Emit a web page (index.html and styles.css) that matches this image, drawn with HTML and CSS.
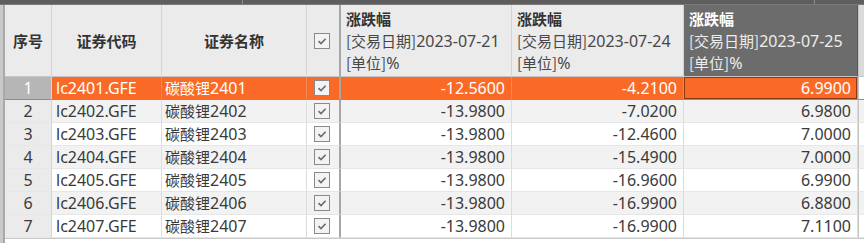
FILE: index.html
```html
<!DOCTYPE html>
<html lang="zh-CN">
<head>
<meta charset="utf-8">
<title>涨跌幅</title>
<link rel="stylesheet" href="styles.css">
</head>
<body>
<div class="topbar">
  <div class="seg s1"></div>
  <div class="seg s2"></div>
  <div class="seg s3"></div>
</div>
<div class="main">
  <div class="leftstrip"></div>
  <div class="grid">
    <div class="row head">
      <div class="c hc center">序号</div>
      <div class="c hc center">证券代码</div>
      <div class="c hc center">证券名称</div>
      <div class="c hc chk fz"><span class="box"><svg viewBox="0 0 14 14" width="14" height="14"><path d="M3.5 7.2 L6 9.6 L10.6 4.8" fill="none" stroke="#6a6a6a" stroke-width="1.6"/></svg></span></div>
      <div class="c hc multi"><b>涨跌幅</b><span><span class="zh">[交易日期]</span>2023-07-21</span><span><span class="zh">[单位]</span>%</span></div>
      <div class="c hc multi"><b>涨跌幅</b><span><span class="zh">[交易日期]</span>2023-07-24</span><span><span class="zh">[单位]</span>%</span></div>
      <div class="c hc multi dark"><b>涨跌幅</b><span><span class="zh">[交易日期]</span>2023-07-25</span><span><span class="zh">[单位]</span>%</span></div>
      <div class="c hc tail"></div>
    </div>

    <div class="row sel">
      <div class="c idx">1</div>
      <div class="c code">lc2401.GFE</div>
      <div class="c name"><span class="zh">碳酸锂</span>2401</div>
      <div class="c chk fz"><span class="box"><svg viewBox="0 0 14 14" width="14" height="14"><path d="M3.5 7.2 L6 9.6 L10.6 4.8" fill="none" stroke="#6a6a6a" stroke-width="1.6"/></svg></span></div>
      <div class="c num">-12.5600</div>
      <div class="c num">-4.2100</div>
      <div class="c num cur">6.9900</div>
      <div class="c tail"></div>
    </div>

    <div class="row alt">
      <div class="c idx">2</div>
      <div class="c code">lc2402.GFE</div>
      <div class="c name"><span class="zh">碳酸锂</span>2402</div>
      <div class="c chk fz"><span class="box"><svg viewBox="0 0 14 14" width="14" height="14"><path d="M3.5 7.2 L6 9.6 L10.6 4.8" fill="none" stroke="#6a6a6a" stroke-width="1.6"/></svg></span></div>
      <div class="c num">-13.9800</div>
      <div class="c num">-7.0200</div>
      <div class="c num">6.9800</div>
      <div class="c tail"></div>
    </div>

    <div class="row">
      <div class="c idx">3</div>
      <div class="c code">lc2403.GFE</div>
      <div class="c name"><span class="zh">碳酸锂</span>2403</div>
      <div class="c chk fz"><span class="box"><svg viewBox="0 0 14 14" width="14" height="14"><path d="M3.5 7.2 L6 9.6 L10.6 4.8" fill="none" stroke="#6a6a6a" stroke-width="1.6"/></svg></span></div>
      <div class="c num">-13.9800</div>
      <div class="c num">-12.4600</div>
      <div class="c num">7.0000</div>
      <div class="c tail"></div>
    </div>

    <div class="row alt">
      <div class="c idx">4</div>
      <div class="c code">lc2404.GFE</div>
      <div class="c name"><span class="zh">碳酸锂</span>2404</div>
      <div class="c chk fz"><span class="box"><svg viewBox="0 0 14 14" width="14" height="14"><path d="M3.5 7.2 L6 9.6 L10.6 4.8" fill="none" stroke="#6a6a6a" stroke-width="1.6"/></svg></span></div>
      <div class="c num">-13.9800</div>
      <div class="c num">-15.4900</div>
      <div class="c num">7.0000</div>
      <div class="c tail"></div>
    </div>

    <div class="row">
      <div class="c idx">5</div>
      <div class="c code">lc2405.GFE</div>
      <div class="c name"><span class="zh">碳酸锂</span>2405</div>
      <div class="c chk fz"><span class="box"><svg viewBox="0 0 14 14" width="14" height="14"><path d="M3.5 7.2 L6 9.6 L10.6 4.8" fill="none" stroke="#6a6a6a" stroke-width="1.6"/></svg></span></div>
      <div class="c num">-13.9800</div>
      <div class="c num">-16.9600</div>
      <div class="c num">6.9900</div>
      <div class="c tail"></div>
    </div>

    <div class="row alt">
      <div class="c idx">6</div>
      <div class="c code">lc2406.GFE</div>
      <div class="c name"><span class="zh">碳酸锂</span>2406</div>
      <div class="c chk fz"><span class="box"><svg viewBox="0 0 14 14" width="14" height="14"><path d="M3.5 7.2 L6 9.6 L10.6 4.8" fill="none" stroke="#6a6a6a" stroke-width="1.6"/></svg></span></div>
      <div class="c num">-13.9800</div>
      <div class="c num">-16.9900</div>
      <div class="c num">6.8800</div>
      <div class="c tail"></div>
    </div>

    <div class="row">
      <div class="c idx">7</div>
      <div class="c code">lc2407.GFE</div>
      <div class="c name"><span class="zh">碳酸锂</span>2407</div>
      <div class="c chk fz"><span class="box"><svg viewBox="0 0 14 14" width="14" height="14"><path d="M3.5 7.2 L6 9.6 L10.6 4.8" fill="none" stroke="#6a6a6a" stroke-width="1.6"/></svg></span></div>
      <div class="c num">-13.9800</div>
      <div class="c num">-16.9900</div>
      <div class="c num">7.1100</div>
      <div class="c tail"></div>
    </div>
  </div>
</div>
<div class="bottom">
  <div class="leftstrip"></div>
  <div class="bfill"></div>
</div>
</body>
</html>
```

FILE: styles.css
```css
* { box-sizing: border-box; }
html, body { margin: 0; padding: 0; }
body {
  width: 864px;
  height: 243px;
  overflow: hidden;
  background: #ffffff;
  font-family: "Noto Sans", "Noto Sans CJK SC", sans-serif;
  font-size: 16px;
  color: #3a3a3a;
}
.zh { font-family: "Noto Sans CJK SC", sans-serif; font-size: 15px; }

.topbar {
  height: 5px;
  display: flex;
  background: #5e5e5e;
  border-bottom: 1px solid #7a7a7a;
}
.seg { height: 100%; }
.s1 { width: 243px; border-right: 1px solid #8c8c8c; }
.s2 { width: 572px; border-right: 1px solid #8c8c8c; }
.s3 { flex: 1; }

.main { display: flex; }
.leftstrip {
  width: 5px;
  flex: none;
  background: #c9c9c9;
  border-right: 2px solid #a9a9a9;
}

.grid {
  flex: 1;
  display: grid;
  grid-template-columns: 47px 110px 145px 34px 171px 172px 174px 1fr;
  grid-template-rows: 72px repeat(7, 23px);
}
.row { display: contents; }

.c {
  border-right: 1px solid #dcdcdc;
  border-bottom: 1px solid #e6e6e6;
  line-height: 22px;
  white-space: nowrap;
  overflow: hidden;
  background: #ffffff;
}
.row.alt .c { background: #f2f2f2; }

.hc {
  background: #ebebeb;
  border-right: 1px solid #d4d4d4;
  border-bottom: 1px solid #c6c6c6;
  color: #333333;
}
.center {
  display: flex;
  align-items: center;
  justify-content: center;
  font-family: "Noto Sans CJK SC", sans-serif;
  font-size: 15px;
  font-weight: 700;
}
.multi {
  display: flex;
  flex-direction: column;
  padding: 3px 0 0 5px;
  color: #474747;
}
.multi b {
  font-family: "Noto Sans CJK SC", sans-serif;
  font-size: 15px;
  font-weight: 700;
  color: #333333;
  line-height: 22px;
}
.multi span { line-height: 22px; }
.multi.dark { background: #6c6c6c; color: #ececec; border-right-color: #5a5a5a; }
.multi.dark b { color: #ffffff; }

.chk {
  display: flex;
  align-items: center;
  justify-content: center;
  padding-right: 2px;
}
.fz { border-right: 2px solid #a6a6a6; }
.row .c.fz { border-right: 2px solid #a6a6a6; }
.box {
  width: 16px;
  height: 16px;
  border: 1px solid #8a8a8a;
  background: #f3f3f3;
  display: flex;
  align-items: center;
  justify-content: center;
}
.box svg { display: block; }

.idx {
  text-align: center;
  background: #ebebeb !important;
  border-right: 1px solid #d4d4d4;
  color: #3a3a3a;
}
.code { padding-left: 4px; }
.name { padding-left: 3px; }
.num { text-align: right; padding-right: 6px; }

.tail { border-right: none; border-left: 1px solid #c4c4c4; }
.hc.tail { background: #dadada; }

.row.sel .c { background: #fa6a26; color: #ffffff; border-bottom-color: #fa6a26; border-right-color: #f08a5a; }
.row.sel .c.fz { border-right: 2px solid #a6a6a6; }
.row.sel .idx { background: #b6b6b6 !important; color: #ffffff; border-right-color: #d4d4d4; }
.row.sel .tail { background: #ffffff; color: #3a3a3a; border-left-color: #c4c4c4; }
.row.sel .cur { box-shadow: inset 0 0 0 1px #8a3a12; }

.bottom { display: flex; height: 5px; }
.bfill { flex: 1; border-top: 1px solid #c8c8c8; background: #ffffff; }
```
